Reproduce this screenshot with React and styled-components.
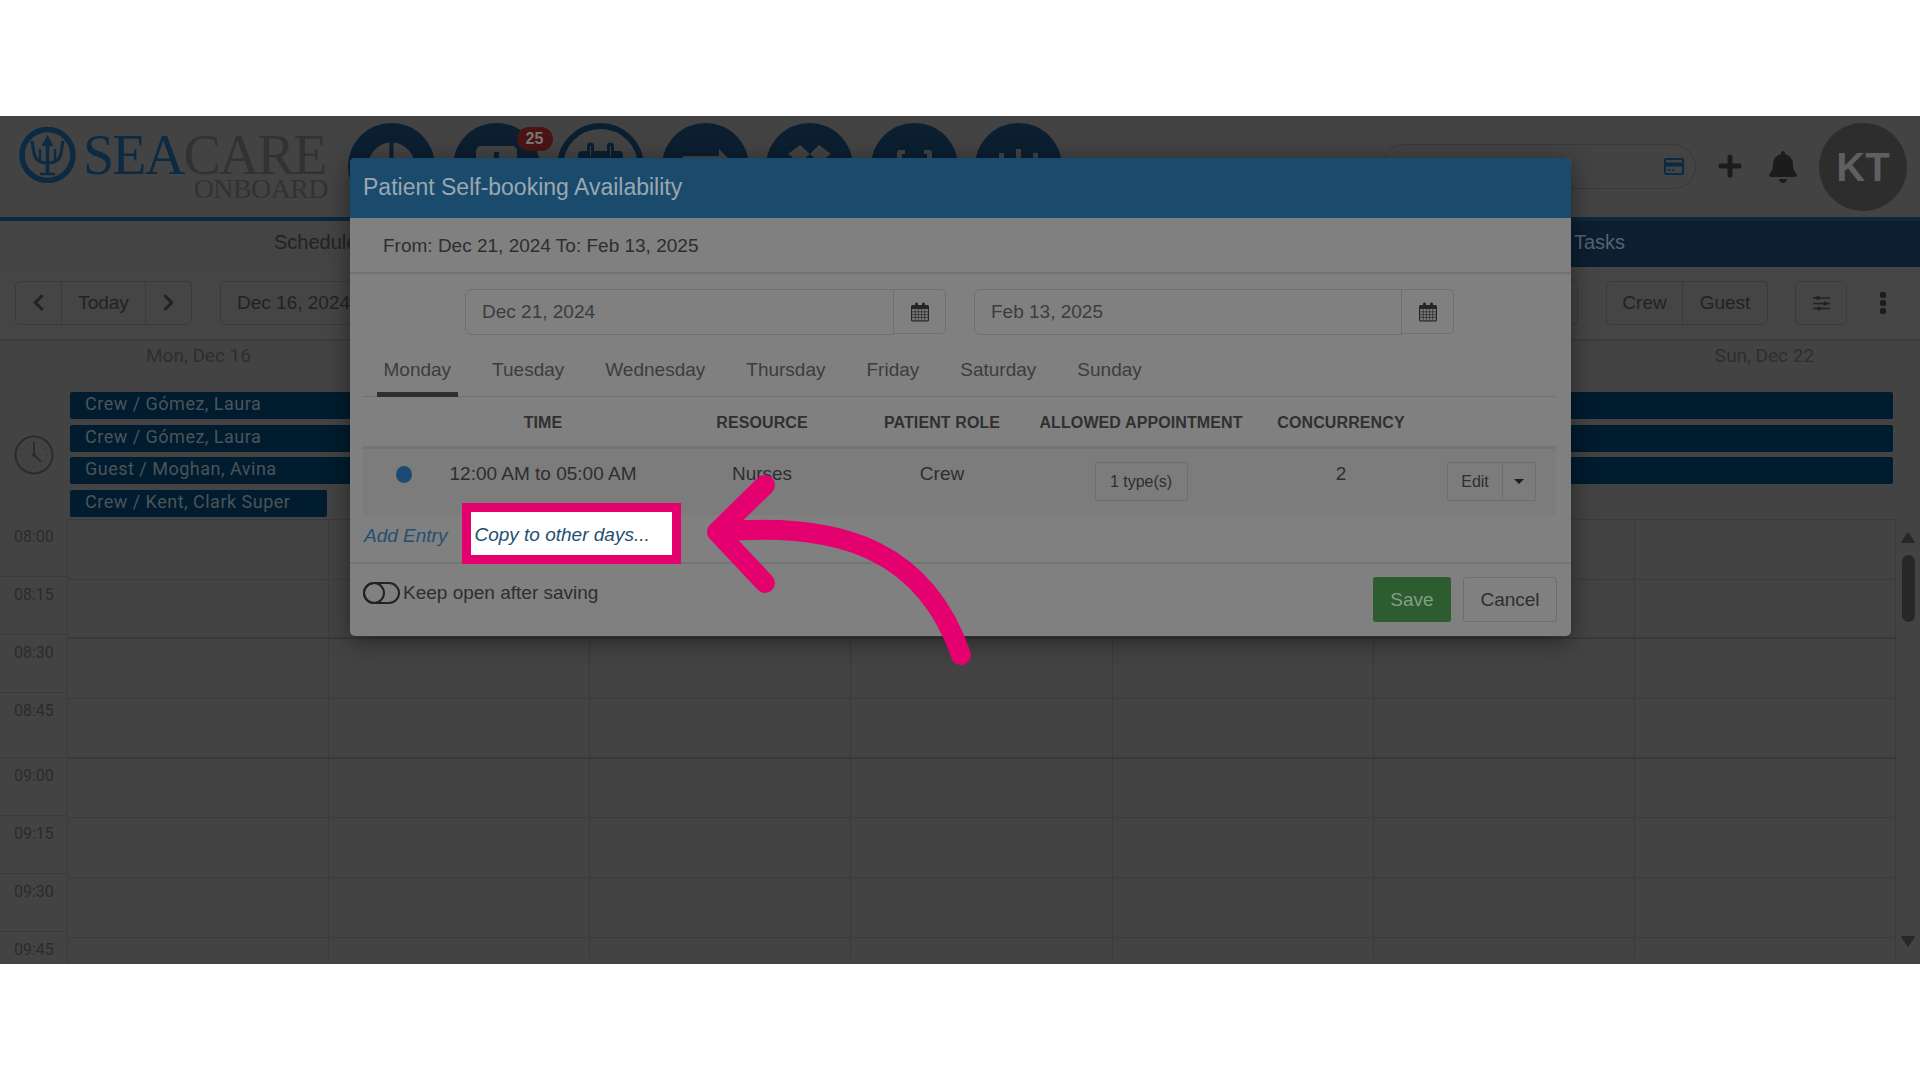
import React from "react";
import styled, { createGlobalStyle } from "styled-components";
import { FaBell, FaPlus, FaChevronLeft, FaChevronRight } from "react-icons/fa";

const GlobalStyle = createGlobalStyle`
  html, body {
    margin: 0;
    padding: 0;
    background: #fff;
    font-family: "Liberation Sans", Arial, sans-serif;
  }
  *, *::before, *::after {
    box-sizing: border-box;
  }
`;

const Page = styled.div`
  width: 1920px;
  height: 1080px;
  padding: 116px 0;
  overflow: hidden;
`;

const Frame = styled.div`
  position: relative;
  height: 848px;
  background: #434343;
  overflow: hidden;
  display: flex;
  flex-direction: column;
`;

/* header */
const Header = styled.header`
  display: flex;
  height: 105px;
  flex-shrink: 0;
  background: #434343;
  border-bottom: 4px solid #0c283d;
  padding-right: 13px;
`;

const Logo = styled.div`
  width: 348px;
  padding: 11px 0 0 19px;
  flex-shrink: 0;
`;

const LogoTop = styled.div`
  display: flex;
  align-items: center;
  height: 56px;
  font-family: "Liberation Serif", "Times New Roman", serif;
  font-size: 56px;
  line-height: 62px;
  letter-spacing: -1.8px;
  gap: 7px;
`;

const LogoSea = styled.span`
  color: #0c2a41;
`;

const LogoCare = styled.span`
  color: #323232;
`;

const LogoSub = styled.div`
  font-family: "Liberation Serif", "Times New Roman", serif;
  font-size: 28px;
  line-height: 20px;
  letter-spacing: -0.6px;
  color: #323232;
  text-align: right;
  width: 309px;
  margin-top: -4px;
`;

const Circles = styled.div`
  display: flex;
  gap: 17.5px;
  padding-top: 7px;
`;

const Circle = styled.div`
  position: relative;
  width: 87px;
  height: 87px;
  border-radius: 50%;
  background: ${(p) => (p.$active ? "#434343" : "#0b1f31")};
  border: ${(p) => (p.$active ? "6px solid #0b1f31" : "none")};
  color: ${(p) => (p.$active ? "#0b1f31" : "#434343")};
  svg {
    position: absolute;
    left: ${(p) => (p.$active ? "-6px" : "0")};
    top: ${(p) => (p.$active ? "-6px" : "0")};
  }
`;

const Badge = styled.span`
  position: absolute;
  top: 4px;
  right: -13px;
  width: 36px;
  height: 24px;
  border-radius: 12px;
  background: #4a1414;
  color: #777777;
  font-size: 16px;
  font-weight: 700;
  line-height: 24px;
  text-align: center;
`;

const HeaderRight = styled.div`
  margin-left: auto;
  display: flex;
  align-items: flex-start;
`;

const SearchPill = styled.div`
  width: 314px;
  height: 45px;
  margin-top: 28px;
  border: 1.5px solid #383838;
  border-radius: 23px;
  display: flex;
  align-items: center;
  justify-content: flex-end;
  padding-right: 11px;
  color: #0c2a41;
`;

const PlusBox = styled.div`
  margin: 37px 24px 0 21px;
  color: #1c1c1c;
  font-size: 26px;
  line-height: 0;
`;

const BellBox = styled.div`
  margin: 35px 20px 0 0;
  color: #1c1c1c;
  font-size: 32px;
  line-height: 0;
`;

const Avatar = styled.div`
  width: 88px;
  height: 88px;
  margin-top: 7px;
  border-radius: 50%;
  background: #2d2d2d;
  color: #5f5f5f;
  font-size: 40px;
  font-weight: 700;
  line-height: 88px;
  text-align: center;
`;

/* nav row */
const NavRow = styled.nav`
  display: flex;
  height: 46px;
  flex-shrink: 0;
`;

const NavSchedule = styled.div`
  width: 760px;
  background: #444444;
  color: #222222;
  font-size: 20px;
  line-height: 42px;
  padding-left: 274px;
`;

const NavRest = styled.div`
  flex: 1;
  background: #0b1f31;
  color: #566470;
  font-size: 20px;
  line-height: 42px;
  padding-left: 814px;
`;

/* toolbar */
const Toolbar = styled.div`
  display: flex;
  align-items: center;
  height: 74px;
  flex-shrink: 0;
  padding: 1px 34px 2px 15px;
  background: #454545;
  border-bottom: 2px solid #3d3d3d;
`;

const BtnGroup = styled.div`
  display: flex;
  height: 44px;
  border: 1px solid #3a3a3a;
  border-radius: 5px;
  margin-right: ${(p) => p.$mr || 0}px;
  margin-left: ${(p) => p.$ml || 0};
`;

const ToolBtn = styled.div`
  width: ${(p) => p.$w}px;
  display: flex;
  align-items: center;
  justify-content: center;
  font-size: 19px;
  color: #222222;
  & + & {
    border-left: 1px solid #3a3a3a;
  }
`;

const DateText = styled(ToolBtn)`
  justify-content: flex-start;
  padding-left: 16px;
`;

const Dots = styled.div`
  display: flex;
  flex-direction: column;
  gap: 2px;
  margin-left: 33px;
  span {
    width: 6px;
    height: 6px;
    border-radius: 2px;
    background: #1c1c1c;
  }
`;

/* all-day strip */
const AllDay = styled.div`
  display: flex;
  height: 178px;
  flex-shrink: 0;
`;

const ClockCell = styled.div`
  width: 68px;
  flex-shrink: 0;
  padding: 94px 0 0 14px;
  color: #2c2c2c;
`;

const AllDayGrid = styled.div`
  width: 1828px;
  display: grid;
  grid-template-columns: repeat(7, 1fr);
  grid-template-rows: 45.3px repeat(4, 27px);
  row-gap: 5.7px;
  padding-right: 1px;
`;

const DayLabel = styled.div`
  font-family: Roboto, sans-serif;
  font-size: 19px;
  line-height: 30px;
  text-align: center;
  color: #2e2e2e;
`;

const EventBar = styled.div`
  grid-column: ${(p) => (p.$full ? "1 / -1" : "1 / 2")};
  margin: 0 2px;
  border-radius: 2px;
  background: #011c2e;
  color: #4b5459;
  font-family: Roboto, sans-serif;
  font-size: 18px;
  letter-spacing: 0.5px;
  line-height: 24px;
  padding-left: 15px;
`;

/* time grid */
const Schedule = styled.div`
  flex: 1;
  display: flex;
  min-height: 0;
`;

const TimeCol = styled.div`
  width: 68px;
  flex-shrink: 0;
`;

const TimeLabel = styled.div`
  height: ${(p) => (p.$tall ? 65 : 58)}px;
  border-bottom: 1px solid #3a3a3a;
  border-right: 1px solid #3a3a3a;
  font-family: Roboto, sans-serif;
  font-size: 16px;
  line-height: 35px;
  color: #2b2b2b;
  padding-left: 14px;
  &:last-child {
    border-bottom: none;
  }
`;

const SlotGrid = styled.div`
  width: 1828px;
  height: 439px;
  overflow: hidden;
  display: grid;
  grid-template-columns: repeat(7, 1fr);
  grid-auto-rows: 59.7px;
  border-top: 1px solid #3b3b3b;
`;

const Slot = styled.div`
  border-right: 1px solid #3b3b3b;
  border-bottom: ${(p) => (p.$strong ? "2px solid #393939" : "1px solid #3b3b3b")};
`;

const ScrollCol = styled.div`
  flex: 1;
  display: flex;
  flex-direction: column;
  align-items: center;
  padding: 13px 0 17px;
  color: #272727;
`;

const Thumb = styled.div`
  width: 13px;
  height: 67px;
  margin-top: 12px;
  border-radius: 7px;
  background: #272727;
`;

const ArrowDown = styled.svg`
  margin-top: auto;
`;

/* modal */
const Modal = styled.div`
  position: absolute;
  left: 350px;
  top: 42px;
  width: 1221px;
  height: 478px;
  border-radius: 5px;
  background: #808080;
  box-shadow: 0 5px 24px rgba(0, 0, 0, 0.45);
  color: #2e2e2e;
  display: flex;
  flex-direction: column;
`;

const ModalHead = styled.div`
  height: 60px;
  flex-shrink: 0;
  background: #1a4a6c;
  border-radius: 5px 5px 0 0;
  color: #9aa7b0;
  font-size: 23px;
  line-height: 58px;
  padding-left: 13px;
`;

const RangeInfo = styled.div`
  height: 56px;
  flex-shrink: 0;
  border-bottom: 2px solid #727272;
  font-size: 19px;
  line-height: 56px;
  padding-left: 33px;
`;

const DateRow = styled.div`
  display: flex;
  gap: 28px;
  padding: 15px 0 0 115px;
  flex-shrink: 0;
`;

const DateGroup = styled.div`
  display: flex;
  width: ${(p) => p.$w}px;
  height: 46px;
`;

const DateField = styled.div`
  flex: 1;
  border: 1.5px solid #6f6f6f;
  border-radius: 6px 0 0 6px;
  font-size: 19px;
  line-height: 43px;
  padding-left: 16px;
  color: #3c3c3c;
`;

const DateBtn = styled.div`
  width: 52px;
  height: 45px;
  border: 1.5px solid #6f6f6f;
  border-left: none;
  border-radius: 0 5px 5px 0;
  display: flex;
  align-items: center;
  justify-content: center;
  color: #262626;
`;

const TabList = styled.div`
  display: flex;
  gap: 28px;
  height: 46px;
  margin: 16px 15px 0 13px;
  padding-left: 14px;
  border-bottom: 1px solid #727272;
  flex-shrink: 0;
`;

const Tab = styled.div`
  height: 46px;
  padding: 0 6.5px;
  font-size: 19px;
  line-height: 38px;
  color: #3c3c3c;
  border-bottom: 5px solid ${(p) => (p.$active ? "#2f2f2f" : "transparent")};
`;

const columns = "82px 196px 242px 118px 280px 120px 155px";

const TableHead = styled.div`
  display: grid;
  grid-template-columns: ${columns};
  height: 52px;
  margin: 0 15px 0 13px;
  border-bottom: 3px solid #747474;
  font-size: 16px;
  font-weight: 700;
  line-height: 51px;
  letter-spacing: 0.1px;
  color: #303030;
  flex-shrink: 0;
  > span {
    justify-self: center;
    white-space: nowrap;
  }
`;

const TableRow = styled.div`
  display: grid;
  grid-template-columns: ${columns};
  align-items: start;
  height: 66px;
  margin: 0 15px 0 13px;
  padding-top: 12px;
  background: #7c7c7c;
  font-size: 19px;
  line-height: 26px;
  color: #2e2e2e;
  flex-shrink: 0;
  > span {
    justify-self: center;
    white-space: nowrap;
  }
`;

const StatusDot = styled.i`
  display: block;
  width: 16px;
  height: 17px;
  margin: 5px 0 0 33px;
  border-radius: 50%;
  background: #1c4a73;
`;

const OutlineBtn = styled.div`
  display: flex;
  align-items: center;
  justify-content: center;
  height: 39px;
  border: 1.5px solid #6e6e6e;
  border-radius: 3px;
  font-size: 16px;
  color: #2e2e2e;
`;

const TypesBtn = styled(OutlineBtn)`
  width: 93px;
  margin-top: 1px;
`;

const SplitBtn = styled(OutlineBtn)`
  margin: 1px 0 0 46px;
  width: 89px;
`;

const SplitMain = styled.span`
  width: 55px;
  line-height: 36px;
  text-align: center;
  border-right: 1.5px solid #6e6e6e;
`;

const SplitCaret = styled.span`
  flex: 1;
  display: flex;
  justify-content: center;
  &::before {
    content: "";
    border-top: 5px solid #1f1f1f;
    border-left: 5px solid transparent;
    border-right: 5px solid transparent;
  }
`;

const LinkRow = styled.div`
  display: flex;
  align-items: center;
  height: 47px;
  padding: 0 0 5px 14px;
  flex-shrink: 0;
`;

const LinkText = styled.span`
  font-size: 19px;
  font-style: italic;
  color: #234f72;
`;

const CopyLink = styled(LinkText)`
  width: 201px;
  height: 43px;
  margin: -5px 0 0 24px;
  padding: 3px 0 0 3px;
  line-height: 40px;
  background: #fff;
  outline: 9.5px solid #e5006f;
  position: relative;
  z-index: 1;
`;

const ModalFoot = styled.div`
  flex: 1;
  display: flex;
  justify-content: space-between;
  align-items: flex-start;
  padding: 13px 14px 0 13px;
  border-top: 2px solid #757575;
`;

const KeepOpen = styled.div`
  display: flex;
  align-items: center;
  gap: 3px;
  height: 26px;
  margin-top: 3px;
  font-size: 19px;
  color: #2e2e2e;
`;

const Toggle = styled.span`
  position: relative;
  width: 37px;
  height: 22px;
  border: 2px solid #222222;
  border-radius: 11px;
  &::before {
    content: "";
    position: absolute;
    left: -2px;
    top: -2px;
    width: 22px;
    height: 22px;
    border: 2px solid #222222;
    border-radius: 50%;
  }
`;

const FootBtns = styled.div`
  display: flex;
  gap: 12px;
`;

const SaveBtn = styled.div`
  width: 78px;
  height: 45px;
  border-radius: 3px;
  background: #2c5c2f;
  color: #83a084;
  font-size: 19px;
  line-height: 45px;
  text-align: center;
`;

const CancelBtn = styled(OutlineBtn)`
  width: 94px;
  height: 45px;
  font-size: 19px;
`;

const ArrowLayer = styled.svg`
  position: absolute;
  left: 0;
  top: 0;
  z-index: 2;
  pointer-events: none;
`;

const times = ["08:00", "08:15", "08:30", "08:45", "09:00", "09:15", "09:30", "09:45"];
const days = ["Mon, Dec 16", "Tue, Dec 17", "Wed, Dec 18", "Thu, Dec 19", "Fri, Dec 20", "Sat, Dec 21", "Sun, Dec 22"];
const tabs = ["Monday", "Tuesday", "Wednesday", "Thursday", "Friday", "Saturday", "Sunday"];
const strongRows = [1, 3, 7];

const TridentIcon = () => (
  <svg width="57" height="56" viewBox="0 0 57 56" fill="none" stroke="#0c2a41">
    <circle cx="28.5" cy="28" r="25.5" strokeWidth="5.5" />
    <path d="M28.5 12v35" strokeWidth="3.5" />
    <path d="M21 47h15" strokeWidth="2.5" />
    <path d="M28.5 8l-6 11h12z" fill="#0c2a41" stroke="none" />
    <path d="M13 14l2 12c1 7 6 10 13.500 10S41 33 42 26l2-12" strokeWidth="3" />
    <path d="M21 22v11M36 22v11" strokeWidth="2.5" />
  </svg>
);

const CalendarIcon = () => (
  <svg width="20" height="20" viewBox="0 0 20 20">
    <path d="M1 4.500C1 3.700 1.600 3 2.500 3H5V2c0-1 .8-1.500 1.500-1.500S8 1 8 2v1h4V2c0-1 .8-1.500 1.500-1.500S15 1 15 2v1h2.500c.9 0 1.500.7 1.500 1.500V18c0 .8-.6 1.500-1.500 1.500h-15C1.600 19.500 1 18.800 1 18z" fill="currentColor" />
    <path d="M2.200 7h15.600v11.300H2.200z" fill="#7c7c7c" />
    <path d="M2.200 9.800h15.600M2.200 12.600h15.600M2.200 15.400h15.600M5.300 7v11.300M8.400 7v11.300M11.600 7v11.300M14.700 7v11.300" stroke="currentColor" strokeWidth=".7" />
  </svg>
);

const CardIcon = () => (
  <svg width="20" height="17" viewBox="0 0 20 17">
    <path d="M2 0h16a2 2 0 0 1 2 2v13a2 2 0 0 1-2 2H2a2 2 0 0 1-2-2V2a2 2 0 0 1 2-2zm0 2v2.500h16V2zm0 6.500V15h16V8.500zM3.500 11.500h3v1.500h-3zm4.500 0h2.500v1.500H8z" fill="currentColor" fillRule="evenodd" />
  </svg>
);

const ClockIcon = () => (
  <svg width="40" height="40" viewBox="0 0 40 40" fill="none" stroke="currentColor">
    <circle cx="20" cy="20" r="18.500" strokeWidth="2" />
    <path d="M20 7v13l7 7" strokeWidth="1.800" />
    <circle cx="20" cy="20" r="2" fill="currentColor" stroke="none" />
    <path d="M33 20h-.5M7 20h.5M20 33v-.5M26.500 8.700l-.3.5M31.300 13.500l-.5.3M31.300 26.500l-.5-.3M13.500 8.700l.3.5M8.700 13.500l.5.3M8.700 26.500l.5-.3M13.500 31.300l.3-.5M26.500 31.300l-.3-.5" strokeWidth="1.500" />
  </svg>
);

const SlidersIcon = () => (
  <svg width="17" height="16" viewBox="0 0 17 16" fill="none" stroke="currentColor">
    <path d="M0 3h17M0 8.500h17M0 13.500h17" strokeWidth="1.300" />
    <circle cx="5" cy="3" r="2" fill="currentColor" stroke="none" />
    <circle cx="12" cy="8.500" r="2" fill="currentColor" stroke="none" />
    <circle cx="6" cy="13.500" r="2" fill="currentColor" stroke="none" />
  </svg>
);

/* the nav icons, only their upper part shows above the dialog */
const navIcons = [
  <path key="pie" d="M41.500 19.500A24 24 0 0 0 20 43h21.500zM45.500 19.500V43H67A24 24 0 0 0 45.500 19.500z" fill="currentColor" />,
  <path key="case" d="M28 23h31a5 5 0 0 1 5 5v28H23V28a5 5 0 0 1 5-5zm13 6v6h5v-6z" fill="currentColor" fillRule="evenodd" />,
  <path key="cal" d="M21 32a4 4 0 0 1 4-4h5v-5a3.500 3.500 0 0 1 7 0v5h13v-5a3.500 3.500 0 0 1 7 0v5h5a4 4 0 0 1 4 4v28H21zm13-9v10h-1V23zm20 0v10h-1V23z" fill="currentColor" fillRule="evenodd" />,
  <path key="arrow" d="M21 33h36v-7l16 16-16 16v-7H21z" fill="currentColor" />,
  <path key="shake" d="M34 22l10 9-10 9-12-9zM53 22l12 9-12 9-9-9z" fill="currentColor" />,
  <path key="steth" d="M28 27h6v4h-3v10h-5V30a3 3 0 0 1 2-3zM53 27h6a3 3 0 0 1 2 3v11h-5V31h-3z" fill="currentColor" />,
  <path key="bars" d="M24 30h5v30h-5zM41 26h5v34h-5zM58 30h5v30h-5z" fill="currentColor" />,
];

const NavCircle = ({ index, active, badge }) => (
  <Circle $active={active}>
    <svg width="87" height="87" viewBox="0 0 87 87">{navIcons[index]}</svg>
    {badge && <Badge>{badge}</Badge>}
  </Circle>
);

export default function App() {
  return (
    <Page>
      <GlobalStyle />
      <Frame>
        <Header>
          <Logo>
            <LogoTop>
              <TridentIcon />
              <span>
                <LogoSea>SEA</LogoSea>
                <LogoCare>CARE</LogoCare>
              </span>
            </LogoTop>
            <LogoSub>ONBOARD</LogoSub>
          </Logo>
          <Circles>
            {navIcons.map((_, i) => (
              <NavCircle key={i} index={i} active={i === 2} badge={i === 1 ? "25" : null} />
            ))}
          </Circles>
          <HeaderRight>
            <SearchPill>
              <CardIcon />
            </SearchPill>
            <PlusBox>
              <FaPlus />
            </PlusBox>
            <BellBox>
              <FaBell />
            </BellBox>
            <Avatar>KT</Avatar>
          </HeaderRight>
        </Header>

        <NavRow>
          <NavSchedule>Schedule</NavSchedule>
          <NavRest>Tasks</NavRest>
        </NavRow>

        <Toolbar>
          <BtnGroup $mr={28}>
            <ToolBtn $w={45}>
              <FaChevronLeft />
            </ToolBtn>
            <ToolBtn $w={84}>Today</ToolBtn>
            <ToolBtn $w={46}>
              <FaChevronRight />
            </ToolBtn>
          </BtnGroup>
          <BtnGroup>
            <DateText $w={300}>Dec 16, 2024</DateText>
          </BtnGroup>
          <BtnGroup $ml="auto" $mr={28}>
            <ToolBtn $w={100}>Week</ToolBtn>
          </BtnGroup>
          <BtnGroup $mr={27}>
            <ToolBtn $w={75}>Crew</ToolBtn>
            <ToolBtn $w={85}>Guest</ToolBtn>
          </BtnGroup>
          <BtnGroup>
            <ToolBtn $w={50}>
              <SlidersIcon />
            </ToolBtn>
          </BtnGroup>
          <Dots>
            <span />
            <span />
            <span />
          </Dots>
        </Toolbar>

        <AllDay>
          <ClockCell>
            <ClockIcon />
          </ClockCell>
          <AllDayGrid>
            {days.map((d) => (
              <DayLabel key={d}>{d}</DayLabel>
            ))}
            <EventBar $full>Crew / Gómez, Laura</EventBar>
            <EventBar $full>Crew / Gómez, Laura</EventBar>
            <EventBar $full>Guest / Moghan, Avina</EventBar>
            <EventBar>Crew / Kent, Clark Super</EventBar>
          </AllDayGrid>
        </AllDay>

        <Schedule>
          <TimeCol>
            {times.map((t) => (
              <TimeLabel key={t} $tall={t === "08:45"}>
                {t}
              </TimeLabel>
            ))}
          </TimeCol>
          <SlotGrid>
            {Array.from({ length: 56 }, (_, i) => (
              <Slot key={i} $strong={strongRows.includes(Math.floor(i / 7))} />
            ))}
          </SlotGrid>
          <ScrollCol>
            <svg width="14" height="11" viewBox="0 0 14 11">
              <path d="M7 0l7 10a1 1 0 0 1-1 1H1a1 1 0 0 1-1-1z" fill="currentColor" />
            </svg>
            <Thumb />
            <ArrowDown width="14" height="11" viewBox="0 0 14 11">
              <path d="M7 11L0 1a1 1 0 0 1 1-1h12a1 1 0 0 1 1 1z" fill="currentColor" />
            </ArrowDown>
          </ScrollCol>
        </Schedule>

        <Modal>
          <ModalHead>Patient Self-booking Availability</ModalHead>
          <RangeInfo>From: Dec 21, 2024 To: Feb 13, 2025</RangeInfo>
          <DateRow>
            <DateGroup $w={481}>
              <DateField>Dec 21, 2024</DateField>
              <DateBtn>
                <CalendarIcon />
              </DateBtn>
            </DateGroup>
            <DateGroup $w={480}>
              <DateField>Feb 13, 2025</DateField>
              <DateBtn>
                <CalendarIcon />
              </DateBtn>
            </DateGroup>
          </DateRow>
          <TabList>
            {tabs.map((t, i) => (
              <Tab key={t} $active={i === 0}>
                {t}
              </Tab>
            ))}
          </TabList>
          <TableHead>
            <span />
            <span>TIME</span>
            <span>RESOURCE</span>
            <span>PATIENT ROLE</span>
            <span>ALLOWED APPOINTMENT</span>
            <span>CONCURRENCY</span>
            <span />
          </TableHead>
          <TableRow>
            <StatusDot />
            <span>12:00 AM to 05:00 AM</span>
            <span>Nurses</span>
            <span>Crew</span>
            <span>
              <TypesBtn>1 type(s)</TypesBtn>
            </span>
            <span>2</span>
            <SplitBtn>
              <SplitMain>Edit</SplitMain>
              <SplitCaret />
            </SplitBtn>
          </TableRow>
          <LinkRow>
            <LinkText>Add Entry</LinkText>
            <CopyLink>Copy to other days...</CopyLink>
          </LinkRow>
          <ModalFoot>
            <KeepOpen>
              <Toggle />
              Keep open after saving
            </KeepOpen>
            <FootBtns>
              <SaveBtn>Save</SaveBtn>
              <CancelBtn>Cancel</CancelBtn>
            </FootBtns>
          </ModalFoot>
        </Modal>

        <ArrowLayer width="1920" height="848" viewBox="0 116 1920 848" fill="none" stroke="#e5006f" strokeLinecap="round" strokeLinejoin="round">
          <path d="M961 655C927 557 850 520 718 532" strokeWidth="20" />
          <path d="M765 485L717 532L765 583" strokeWidth="20" />
        </ArrowLayer>
      </Frame>
    </Page>
  );
}
